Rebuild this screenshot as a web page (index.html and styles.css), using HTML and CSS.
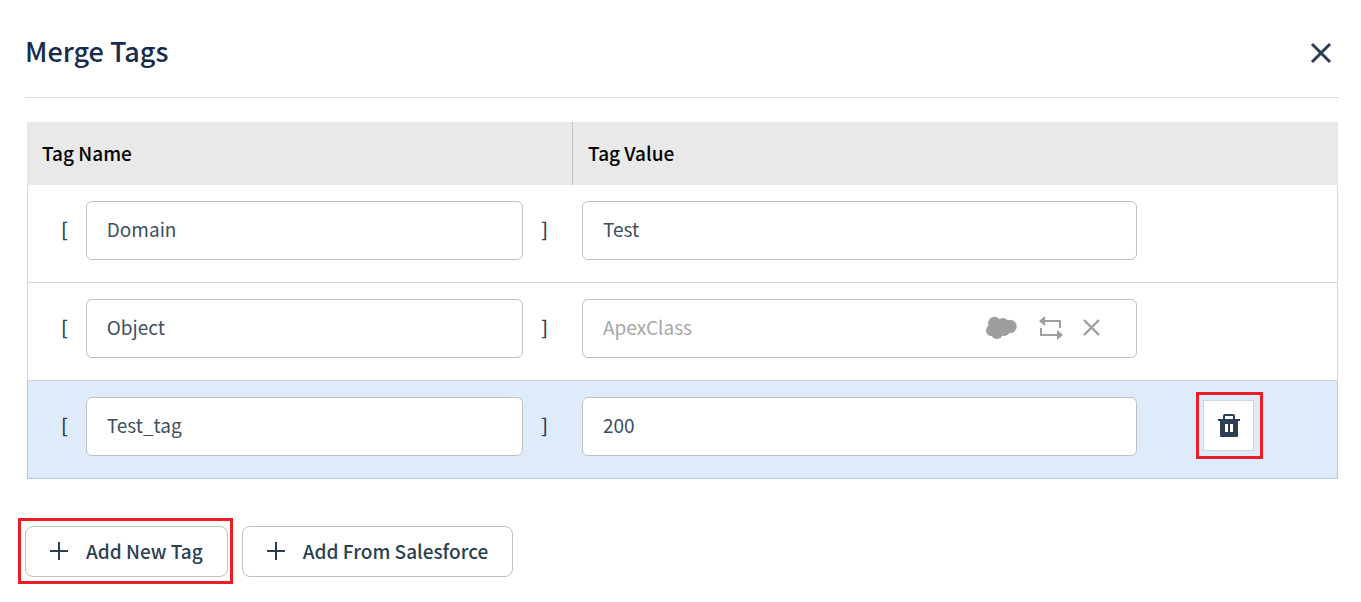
FILE: index.html
```
<!DOCTYPE html>
<html lang="en">

<head>
    <meta charset="UTF-8">
    <title>Merge Tags</title>
    <meta name="viewport" content="width=device-width, initial-scale=1.0">
    <link rel="stylesheet" href="styles.css">
</head>

<body>
    <div class="modal-header">
        <h1 class="modal-title">Merge Tags</h1>
        <button type="button" class="icon-button" aria-label="Close">
            <svg width="22" height="22" viewBox="0 0 22 22">
                <path d="M2 2L20 20M20 2L2 20" fill="none" stroke="#2c3f52" stroke-width="3" />
            </svg>
        </button>
    </div>

    <table class="tag-table">
        <thead>
            <tr>
                <th class="col-name">Tag Name</th>
                <th class="col-value">Tag Value</th>
                <th></th>
            </tr>
        </thead>
        <tbody>
            <tr>
                <td>
                    <div class="name-field">
                        <span class="bracket">[</span>
                        <input type="text" class="text-input" value="Domain" aria-label="Tag name">
                        <span class="bracket">]</span>
                    </div>
                </td>
                <td>
                    <div class="value-field">
                        <input type="text" class="text-input" value="Test" aria-label="Tag value">
                    </div>
                </td>
                <td></td>
            </tr>
            <tr>
                <td>
                    <div class="name-field">
                        <span class="bracket">[</span>
                        <input type="text" class="text-input" value="Object" aria-label="Tag name">
                        <span class="bracket">]</span>
                    </div>
                </td>
                <td>
                    <div class="value-field">
                        <div class="input-group">
                            <input type="text" class="group-input" placeholder="ApexClass" aria-label="Tag value">
                            <button type="button" class="icon-button" aria-label="Salesforce">
                                <svg width="34" height="24" viewBox="0 0 34 24" fill="#9e9e9e">
                                    <circle cx="9.5" cy="7.3" r="6.5" />
                                    <circle cx="18" cy="8" r="6" />
                                    <circle cx="25" cy="10.5" r="6.7" />
                                    <circle cx="6.5" cy="14.5" r="5.5" />
                                    <circle cx="12" cy="17" r="6" />
                                    <circle cx="19" cy="14" r="6" />
                                </svg>
                            </button>
                            <button type="button" class="icon-button" aria-label="Replace">
                                <svg width="24" height="24" viewBox="0 0 24 24">
                                    <path d="M5 5H21V12M2 12V19H19" fill="none" stroke="#9e9e9e" stroke-width="2" />
                                    <path d="M0 5L6 0V10ZM24 19L18 14V24Z" fill="#9e9e9e" />
                                </svg>
                            </button>
                            <button type="button" class="icon-button" aria-label="Clear">
                                <svg width="17" height="17" viewBox="0 0 17 17">
                                    <path d="M1 1L16 16M16 1L1 16" fill="none" stroke="#9e9e9e" stroke-width="2.4" />
                                </svg>
                            </button>
                        </div>
                    </div>
                </td>
                <td></td>
            </tr>
            <tr class="selected">
                <td>
                    <div class="name-field">
                        <span class="bracket">[</span>
                        <input type="text" class="text-input" value="Test_tag" aria-label="Tag name">
                        <span class="bracket">]</span>
                    </div>
                </td>
                <td>
                    <div class="value-field">
                        <input type="text" class="text-input" value="200" aria-label="Tag value">
                    </div>
                </td>
                <td class="action-cell">
                    <button type="button" class="delete-button highlight" aria-label="Delete tag">
                        <svg width="24" height="24" viewBox="0 0 24 24">
                            <path d="M7 6V2Q7 1 8 1H16Q17 1 17 2V6" fill="none" stroke="#2c3f52" stroke-width="2" />
                            <path d="M1 5H23V7H21V22Q21 23 20 23H4Q3 23 3 22V7H1ZM8 10V18H11V10ZM13 10V18H16V10Z"
                                fill="#2c3f52" fill-rule="evenodd" />
                        </svg>
                    </button>
                </td>
            </tr>
        </tbody>
    </table>

    <div class="actions">
        <button type="button" class="add-button highlight">
            <svg width="18" height="18" viewBox="0 0 18 18">
                <path d="M9 0V18M0 9H18" stroke="#2c3f52" stroke-width="2" />
            </svg>
            Add New Tag
        </button>
        <button type="button" class="add-button">
            <svg width="18" height="18" viewBox="0 0 18 18">
                <path d="M9 0V18M0 9H18" stroke="#2c3f52" stroke-width="2" />
            </svg>
            Add From Salesforce
        </button>
    </div>
</body>

</html>
```
FILE: styles.css
```
* {
    box-sizing: border-box;
}

body {
    margin: 0;
    padding: 0 22px 25px 25px;
    font-family: 'Noto Sans CJK SC', 'Open Sans', sans-serif;
    font-size: 19px;
    line-height: 24px;
    color: #2c3f52;
    background: #fff;
}

button,
input {
    font: inherit;
    color: inherit;
}

button {
    cursor: pointer;
}

svg {
    display: block;
}

.modal-header {
    display: flex;
    align-items: center;
    justify-content: space-between;
    padding: 32px 7px 24px 0;
    border-bottom: 1px solid #dddddd;
}

.modal-title {
    margin: 0;
    padding-bottom: 4px;
    font-size: 27px;
    line-height: 37px;
    font-weight: 500;
    color: #172b4d;
}

.icon-button {
    padding: 0;
    border: none;
    background: none;
}

.tag-table {
    width: calc(100% - 3px);
    margin: 24px 1px 0 2px;
    border-collapse: separate;
    border-spacing: 0;
    table-layout: fixed;
}

.tag-table th {
    height: 63px;
    padding: 0 15px 2px;
    background: #e9e9e9;
    color: #000;
    font-weight: 500;
    text-align: left;
}

.col-name {
    width: 41.65%;
    border-right: 1px solid #c0c2c6;
}

.col-value {
    width: 43.8%;
}

.tag-table td {
    padding: 16px 0 22px;
    border-bottom: 1px solid #d6d6d8;
}

.tag-table td:first-child {
    border-left: 1px solid #d6d6d8;
}

.tag-table td:last-child {
    border-right: 1px solid #d6d6d8;
}

.tag-table .selected td {
    background: #deebfb;
    border-color: #b8c7de;
}

.name-field {
    display: flex;
    align-items: center;
    gap: 18px;
    padding: 0 25px 0 33px;
}

.bracket {
    padding-bottom: 4px;
    font-weight: 500;
}

.value-field {
    padding: 0 10px 0 9px;
}

.text-input,
.input-group {
    width: 100%;
    min-width: 0;
    height: 59px;
    padding: 0 20px 4px;
    border: 1px solid #c0c0c0;
    border-radius: 6px;
    background: #fff;
    color: #3d4f61;
}

.input-group {
    display: flex;
    align-items: center;
    gap: 20px;
    padding: 0 36px 2px 20px;
}

.group-input {
    flex: 1;
    min-width: 0;
    padding: 0 0 2px;
    border: none;
    background: none;
}

.group-input::placeholder {
    color: #a6a6a6;
    opacity: 1;
}

.tag-table .action-cell {
    padding: 0 0 8px 56px;
}

.delete-button {
    display: flex;
    align-items: center;
    justify-content: center;
    width: 51px;
    height: 51px;
    padding: 0;
    border: 1px solid #d2d5da;
    background: #fff;
}

.actions {
    display: flex;
    gap: 14px;
    margin-top: 47px;
}

.add-button {
    display: flex;
    align-items: center;
    gap: 18px;
    height: 51px;
    padding: 0 24px 2px;
    border: 1px solid #c0c0c0;
    border-radius: 8px;
    background: #fff;
    font-weight: 500;
}

/* red callout frame drawn around a button */
.highlight {
    position: relative;
}

.highlight::after {
    content: "";
    position: absolute;
    inset: -9px -10px -9px -8px;
    border: 3px solid #ee1c25;
}

.add-button.highlight::after {
    inset: -9px -6px -8px -8px;
}
```
